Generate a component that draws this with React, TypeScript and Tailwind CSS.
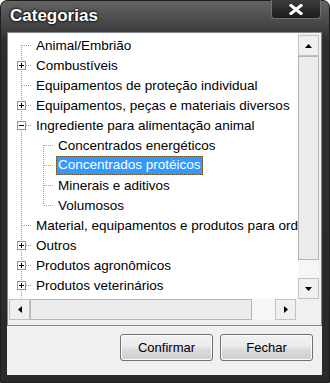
import React from "react";

type Cell = "first" | "mid" | "last" | "pass";

const ROWS: { label: string; cells: Cell[]; box?: "plus" | "minus"; selected?: boolean }[] = [
  { label: "Animal/Embrião", cells: ["first"] },
  { label: "Combustíveis", cells: ["mid"], box: "plus" },
  { label: "Equipamentos de proteção individual", cells: ["mid"] },
  { label: "Equipamentos, peças e materiais diversos", cells: ["mid"], box: "plus" },
  { label: "Ingrediente para alimentação animal", cells: ["mid"], box: "minus" },
  { label: "Concentrados energéticos", cells: ["pass", "first"] },
  { label: "Concentrados protéicos", cells: ["pass", "mid"], selected: true },
  { label: "Minerais e aditivos", cells: ["pass", "mid"] },
  { label: "Volumosos", cells: ["pass", "last"] },
  { label: "Material, equipamentos e produtos para ordenha", cells: ["mid"] },
  { label: "Outros", cells: ["mid"], box: "plus" },
  { label: "Produtos agronômicos", cells: ["mid"], box: "plus" },
  { label: "Produtos veterinários", cells: ["mid"], box: "plus" },
];

function Gutter({ type, box }: { type: Cell; box?: "plus" | "minus" }) {
  const y1 = type === "first" ? 10 : 0;
  const y2 = type === "last" ? 10.5 : 20;
  return (
    <svg width="22" height="20" className="shrink-0">
      <line x1="11.5" y1={y1} x2="11.5" y2={y2} stroke="#a0a0a0" strokeDasharray="1 1" />
      {type !== "pass" && (
        <line x1="12" y1="10.5" x2="22" y2="10.5" stroke="#a0a0a0" strokeDasharray="1 1" />
      )}
      {box && (
        <g>
          <rect x="7.5" y="6.5" width="8" height="8" fill="#fff" stroke="#919191" />
          <line x1="9" y1="10.5" x2="14" y2="10.5" stroke="#000" />
          {box === "plus" && <line x1="11.5" y1="8" x2="11.5" y2="13" stroke="#000" />}
        </g>
      )}
    </svg>
  );
}

function Arrow({ dir }: { dir: "up" | "down" | "left" | "right" }) {
  const pts = {
    up: "0,4 7,4 3.5,0",
    down: "0,0 7,0 3.5,4",
    left: "4,0 4,7 0,3.5",
    right: "0,0 0,7 4,3.5",
  }[dir];
  const vertical = dir === "up" || dir === "down";
  return (
    <svg width={vertical ? 7 : 4} height={vertical ? 4 : 7}>
      <polygon points={pts} fill="#000" />
    </svg>
  );
}

function ScrollButton({ dir }: { dir: "up" | "down" | "left" | "right" }) {
  return (
    <div className="w-[21px] h-[21px] shrink-0 border border-[#c2c2c2] bg-[#f0f0f0] flex items-center justify-center">
      <Arrow dir={dir} />
    </div>
  );
}

export default function App() {
  return (
    <div className="w-[330px] h-[383px] flex flex-col rounded-t-[7px] border border-[#1e1e1e] bg-[linear-gradient(#646464,#3c3c3c_31px,#2e2e2e_40px,#2a2a2a)] pl-[6px] pr-[7px] pb-[7px] font-['Liberation_Sans',Arial,sans-serif]">
      {/* title bar */}
      <div className="h-[31px] flex items-start shrink-0">
        <div className="pl-[3px] pt-[5px] text-[17px] font-bold text-white leading-[20px] [text-shadow:0_0_3px_#000,0_0_2px_#000]">
          Categorias
        </div>
        <div className="ml-auto mr-[1px] -mt-px w-[50px] h-[19px] rounded-b-[4px] border border-t-0 border-[#707070] bg-[linear-gradient(#3c3c3c,#1c1c1c)] flex items-center justify-center">
          <svg width="14" height="11" viewBox="0 0 14 11">
            <path d="M2 1.5 L12 9.5 M12 1.5 L2 9.5" stroke="#fff" strokeWidth="3" strokeLinecap="square" />
          </svg>
        </div>
      </div>

      {/* client area */}
      <div className="flex-1 flex flex-col bg-[#f0f0f0]">
        <div className="h-[294px] border border-[#828790] bg-[#f0f0f0] grid grid-cols-[290px_21px] grid-rows-[266px_21px] pr-[2px] pb-[5px]">
          <div className="bg-white pt-[2px] pl-[2px] overflow-hidden text-[13.5px] text-black">
            {ROWS.map((row) => (
              <div key={row.label} className="h-5 flex items-center whitespace-nowrap">
                {row.cells.map((c, i) => (
                  <Gutter key={i} type={c} box={i === row.cells.length - 1 ? row.box : undefined} />
                ))}
                <span
                  className={
                    row.selected
                      ? "ml-[2px] px-[2px] h-[19px] leading-[18px] bg-[#3399ff] text-white outline outline-1 outline-dotted outline-[#6b4a1e] -outline-offset-1"
                      : "ml-[2px] px-[2px] h-[19px] leading-[19px]"
                  }
                >
                  {row.label}
                </span>
              </div>
            ))}
            {/* tree line running on below the visible rows */}
            <div className="h-5 flex">
              <Gutter type="pass" />
            </div>
          </div>

          {/* vertical scrollbar */}
          <div className="mt-[2px] flex flex-col">
            <ScrollButton dir="up" />
            <div className="h-[204px] border border-[#b5b5b5] bg-[#ececec]" />
            <div className="flex-1 bg-[#f6f6f6]" />
            <ScrollButton dir="down" />
          </div>

          {/* horizontal scrollbar */}
          <div className="pl-[1px] flex bg-[#f0f0f0]">
            <ScrollButton dir="left" />
            <div className="w-[222px] border border-[#b5b5b5] bg-[#ececec]" />
            <div className="flex-1 bg-[#f6f6f6]" />
            <ScrollButton dir="right" />
            <div className="w-[2px]" />
          </div>
          <div className="bg-[#f0f0f0]" />
        </div>

        <div className="flex-1 flex justify-end items-start gap-[7px] pt-[8px] pr-[9px]">
          {["Confirmar", "Fechar"].map((label) => (
            <button
              key={label}
              className="w-[93px] h-[27px] rounded-[3px] border border-[#707070] bg-[linear-gradient(#f2f2f2,#ebebeb_45%,#dcdcdc_55%,#cfcfcf)] shadow-[inset_0_0_0_1px_#fbfbfb] text-[13px] text-black"
            >
              {label}
            </button>
          ))}
        </div>
      </div>
    </div>
  );
}
